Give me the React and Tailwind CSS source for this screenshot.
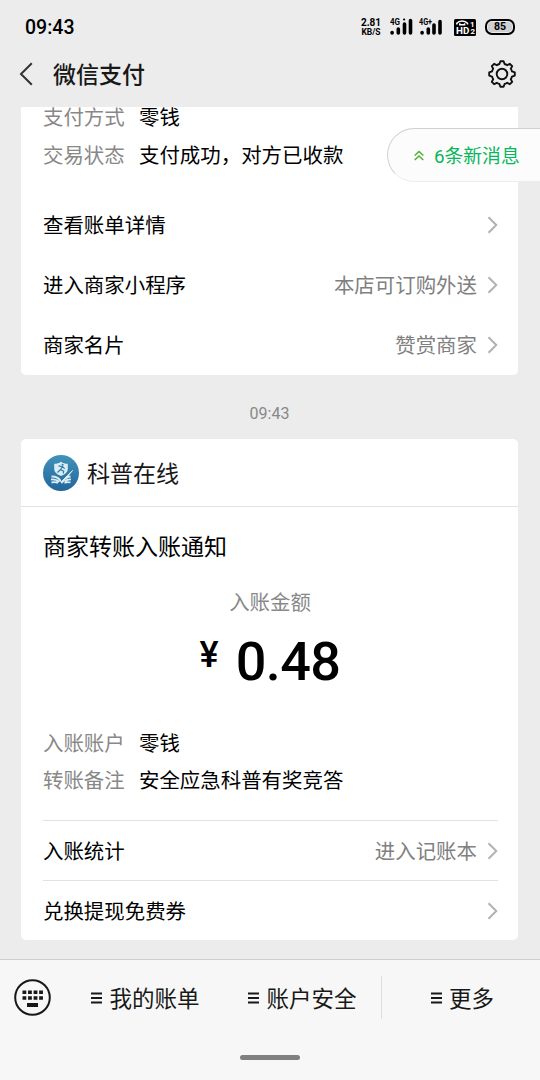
import React from 'react';

const Chevron = () => (
  <svg className="ml-2.5 h-[18px] w-[11px] shrink-0" viewBox="0 0 11 18" fill="none" stroke="#b2b2b2" strokeWidth="2">
    <path d="M1.5 1.2 9.3 9 1.5 16.8" />
  </svg>
);

const Row = ({ label, value, className = '' }) => (
  <div className={`flex h-[60px] items-center text-[20.45px] ${className}`}>
    <span className="pt-[3px] text-black">{label}</span>
    <span className="ml-auto pt-[3px] text-[#808080]">{value}</span>
    <Chevron />
  </div>
);

const Detail = ({ label, value }) => (
  <div className="flex h-[37.5px] items-center pt-[3px] text-[20.45px]">
    <span className="w-24 text-[#888]">{label}</span>
    <span className="text-black">{value}</span>
  </div>
);

const Signal = ({ label, dot }) => (
  <svg className="h-[18px] w-[24px]" viewBox="0 0 24 18">
    <text x="0" y="7.3" fontSize="9" fontWeight="700" fontFamily="Roboto, sans-serif" textLength={label.length > 2 ? 13 : 10} lengthAdjust="spacingAndGlyphs">{label}</text>
    <g stroke="#000" strokeWidth="3.6" strokeLinecap="round">
      <path d={dot ? 'M2.1 14.5v.5M8.3 11v4M14.5 6v9M20.5 2.5v12.5' : 'M3.1 14.5v.5M9.3 11v4M15 7v8M21 3.5v11.5'} />
      {dot && <path d="M14 1.5h.2" strokeWidth="2" />}
    </g>
  </svg>
);

const StatusBar = () => (
  <div className="flex h-[54px] items-center pl-[25px] pr-[25px] text-black">
    <span className="pt-0.5 text-[19.5px] font-medium leading-none">09:43</span>
    <div className="ml-auto flex items-center">
      <div className="w-[22px] text-center font-bold">
        <div className="text-[10px] leading-[9.5px]">2.81</div>
        <div className="text-[8.5px] leading-[8.5px]">KB/S</div>
      </div>
      <div className="ml-2 flex gap-[5px]">
        <Signal label="4G" dot />
        <Signal label="4G+" />
      </div>
      {/* HD voice */}
      <svg className="ml-[11px] h-[17px] w-[22px]" viewBox="0 0 22 17">
        <rect width="22" height="17" rx="1.5" fill="#000" />
        <path d="M2.8 5.5V4.2c2.5-3 8.2-3 10.7 0v1.3M5.8 4.3v1.5h4.8V4.3" fill="none" stroke="#fff" strokeWidth="1.5" />
        <text x="2" y="15.4" fontSize="9.8" fontWeight="700" fontFamily="Roboto, sans-serif" fill="#fff">HD</text>
        <text x="16" y="7.5" fontSize="8" fontWeight="700" fontFamily="Roboto, sans-serif" fill="#fff">1</text>
        <text x="16.4" y="15.4" fontSize="8" fontWeight="700" fontFamily="Roboto, sans-serif" fill="#fff">2</text>
      </svg>
      {/* Battery */}
      <div className="ml-[9px] flex h-[16px] w-[30px] items-center justify-center rounded-[7px] border-2 border-black p-px">
        <div className="flex h-full w-full items-center justify-center rounded-[4px] bg-[#cfcfcf] text-[10.5px] font-bold leading-none">85</div>
      </div>
    </div>
  </div>
);

const Gear = () => (
  <svg className="h-[28px] w-[28px]" viewBox="-14 -14 28 28" fill="none" stroke="#111" strokeWidth="1.9" strokeLinejoin="round">
    <path d="M-1.6-12.8H1.6L2.6-10Q4-9.6 5.2-8.8L7.9-10.2 10.2-7.9 8.8-5.2Q9.6-4 10-2.6L12.8-1.6V1.6L10 2.6Q9.6 4 8.8 5.2L10.2 7.9 7.9 10.2 5.2 8.8Q4 9.6 2.6 10L1.6 12.8H-1.6L-2.6 10Q-4 9.6-5.2 8.8L-7.9 10.2-10.2 7.9-8.8 5.2Q-9.6 4-10 2.6L-12.8 1.6V-1.6L-10-2.6Q-9.6-4-8.8-5.2L-10.2-7.9-7.9-10.2-5.2-8.8Q-4-9.6-2.6-10Z" />
    <circle r="5.3" />
  </svg>
);

const Header = () => (
  <div className="flex h-[53px] items-center pb-[13px] pl-[19px] pr-6">
    <svg className="h-[24px] w-[14px]" viewBox="0 0 14 24" fill="none" stroke="#333" strokeWidth="2">
      <path d="M12.8 1.2 2 12 12.8 22.8" />
    </svg>
    <span className="ml-5 pt-0.5 text-[23px] font-medium text-[#181818]">微信支付</span>
    <div className="ml-auto">
      <Gear />
    </div>
  </div>
);

const Avatar = () => (
  <svg className="h-[36px] w-[36px]" viewBox="0 0 36 36">
    <defs>
      <linearGradient id="avatar" x1="0" y1="0" x2="0" y2="1">
        <stop offset="0" stopColor="#4193b9" />
        <stop offset="1" stopColor="#22659a" />
      </linearGradient>
    </defs>
    <circle cx="18" cy="18" r="18" fill="url(#avatar)" />
    {/* Shield with runner */}
    <path d="M18 6.8c2 1.5 4 2 6.8 2v5c0 3.5-2.8 5.7-6.8 7.2-4-1.5-6.8-3.7-6.8-7.2v-5c2.8 0 4.8-.5 6.8-2Z" fill="#dcecf5" />
    <path d="m15.5 10.8 4 .8-2 3.2 3.2 1.4-.5 2.3M19.5 11.6l2.2 2M17.3 14.8l-2.8 2.7" fill="none" stroke="#2f7da9" strokeWidth="1.2" />
    <circle cx="19.6" cy="9.8" r="1" fill="#2f7da9" />
    {/* Open book with pen */}
    <path d="M8.5 21.5c4-.2 7 1.3 9 4.5M8 24.5c3.5-.2 6 .5 8 2.5M8.5 27.5c2.5-.6 4.5-.4 6.5.3M27.5 21.5c-2 0-3.5.6-5 2M28 24.5c-2.5-.2-4.5.5-6.5 2M27.5 27.5c-2-.5-4-.4-6 .3" fill="none" stroke="#dcecf5" strokeWidth="1.8" />
    <path d="m15 22.5 3.5 4L29.5 15.5 19 28.3Z" fill="#dcecf5" stroke="#dcecf5" strokeWidth="1" />
  </svg>
);

const Keyboard = () => (
  <svg className="h-[37px] w-[37px]" viewBox="0 0 37 37">
    <circle cx="18.5" cy="18.5" r="17.3" fill="none" stroke="#181818" strokeWidth="2" />
    <path d="M8.5 13.2h20.5M8.5 19h20.5" stroke="#181818" strokeWidth="3.5" strokeDasharray="3.8 1.75" />
    <path d="M13 26h11" stroke="#181818" strokeWidth="4" />
  </svg>
);

const MenuItem = ({ label }) => (
  <div className="flex flex-1 items-center justify-center gap-[7px] text-[22.5px] text-[#181818]">
    <svg className="h-[12px] w-[11px]" viewBox="0 0 11 12" stroke="#181818" strokeWidth="1.8">
      <path d="M0 1.5h11M0 6h11M0 10.5h11" />
    </svg>
    <span className="pt-[3px]">{label}</span>
  </div>
);

export default function App() {
  return (
    <div
      lang="zh-CN"
      className="relative flex h-[1080px] w-[540px] flex-col overflow-hidden bg-[#ececec] font-[Roboto,'Noto_Sans_CJK_SC',sans-serif] leading-none"
    >
      <StatusBar />
      <Header />

      <main className="flex h-[852px] flex-col overflow-hidden pl-[21px] pr-[22px]">
        <section className="h-[268px] shrink-0 rounded-b-[5px] bg-white pl-[22px] pr-5">
          <div className="-mt-[9px] mb-[22px]">
            <Detail label="支付方式" value="零钱" />
            <Detail label="交易状态" value="支付成功，对方已收款" />
          </div>
          <Row label="查看账单详情" />
          <Row label="进入商家小程序" value="本店可订购外送" />
          <Row label="商家名片" value="赞赏商家" />
        </section>

        <div className="flex h-16 shrink-0 items-center justify-center pt-[14px] text-[16px] text-[#888]">09:43</div>

        <section className="h-[501px] shrink-0 rounded-[5px] bg-white">
          <div className="flex h-[68px] items-center gap-2 border-b border-[#e2e2e2] px-[22px]">
            <Avatar />
            <span className="pt-[3px] text-[23px] text-[#181818]">科普在线</span>
          </div>
          <div className="pl-[22px] pr-5">
            <div className="pt-[29px] text-[23px] text-black">商家转账入账通知</div>
            <div className="mt-[34px] pr-px text-center text-[20.45px] text-[#888]">入账金额</div>
            <div className="mt-[21px] flex h-[57px] items-start justify-center pr-px font-medium text-black">
              <span className="mr-[17px] mt-[3px] text-[36px]">¥</span>
              <span className="mt-[1px] text-[54px] tracking-[-0.6px]">0.48</span>
            </div>
            <div className="mt-[32.5px]">
              <Detail label="入账账户" value="零钱" />
              <Detail label="转账备注" value="安全应急科普有奖竞答" />
            </div>
            <div className="mt-[21.5px]">
              <Row label="入账统计" value="进入记账本" className="border-t border-[#e2e2e2]" />
              <Row label="兑换提现免费券" className="border-t border-[#e2e2e2]" />
            </div>
          </div>
        </section>
      </main>

      <footer className="flex flex-1 flex-col border-t border-[#cfcfcf] bg-[#f7f7f7]">
        <div className="flex h-[75px] items-center pl-[14px]">
          <Keyboard />
          <div className="ml-[16px] flex flex-[2] items-center">
            <MenuItem label="我的账单" />
            <MenuItem label="账户安全" />
          </div>
          <div className="flex h-[43px] w-[159px] border-l border-[#dedede] pl-[3px]">
            <MenuItem label="更多" />
          </div>
        </div>
        <div className="mx-auto mt-[20px] h-[5px] w-[60px] rounded-full bg-[#808080]" />
      </footer>

      {/* Floating pill over the chat */}
      <div className="absolute right-0 top-[128px] flex h-[54px] w-[153px] items-center rounded-l-full border border-r-0 border-[#d0d0d0] border-b-[#ececec] bg-[#fcfcfc] pl-[26px] text-[18.8px] text-[#07b75b]">
        <svg className="mr-[10px] h-[11px] w-[10px]" viewBox="0 0 10 11" fill="none" stroke="#4bb52c" strokeWidth="1.5">
          <path d="m.7 5.5 4.3-4 4.3 4M.7 10 5 6l4.3 4" />
        </svg>
        <span className="whitespace-nowrap pt-[5px]">6条新消息</span>
      </div>
    </div>
  );
}
